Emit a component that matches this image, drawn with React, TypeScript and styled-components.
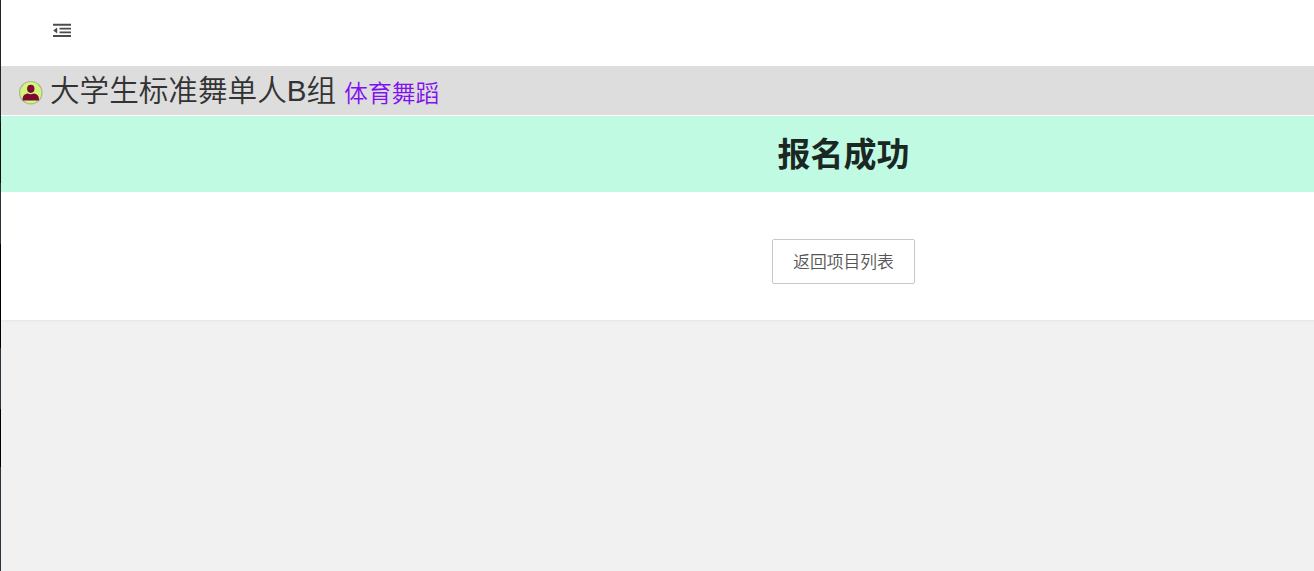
import React from 'react';
import styled, { createGlobalStyle } from 'styled-components';

const GlobalStyle = createGlobalStyle`
  * { box-sizing: border-box; }
  body {
    margin: 0; background: #f1f1f1; overflow: hidden;
    font-family: 'Noto Sans CJK SC', sans-serif;
  }
`;

const Shell = styled.div`
  display: flex; height: 100vh; overflow: hidden;
`;

const SideEdge = styled.div`
  flex: 0 0 1px;
  background: linear-gradient(
    #20242b 0 122px, #07150f 122px 183px, #28333e 183px 244px, #000 244px 348px,
    #28333e 348px 409px, #000 409px 467px, #28333e 467px
  );
`;

/* The body is wider than the window, so its centre sits right of the middle. */
const Body = styled.main`
  flex: 0 0 1685px; display: flex; flex-direction: column;
`;

const Toolbar = styled.header`
  height: 66px; padding: 23px 0 0 51px; background: #fff;
`;

const ShrinkButton = styled.button`
  display: block; padding: 0; border: none; background: transparent;
  color: #4c4c4c; line-height: 0; cursor: pointer;
`;

const TitleBar = styled.div`
  display: flex; align-items: center; height: 49px; padding-left: 17px;
  background: #dddddd;
`;

const Avatar = styled.svg`
  flex: none; margin: 4px 7px 0 0;
`;

const Title = styled.h1`
  margin: 0; font-size: 29.6px; line-height: 49px; font-weight: 350; color: #333;
  font-family: 'Liberation Sans', 'Noto Sans CJK SC', sans-serif; white-space: nowrap;
`;

const Category = styled.span`
  margin: 3px 0 0 8px; font-size: 23.8px; line-height: 46px; font-weight: 350; color: #8010f0;
  white-space: nowrap;
`;

const Card = styled.section`
  height: 205px; padding-top: 1px; background: #fff;
  box-shadow: 0 1px 2px rgba(0, 0, 0, 0.05);
`;

const Banner = styled.div`
  height: 76px; background: #c0fae2; text-align: center;
`;

const Result = styled.h2`
  margin: 0; font-size: 33px; line-height: 72px; font-weight: 700; color: #1b2722;
`;

const Actions = styled.div`
  display: flex; justify-content: center; padding-top: 47px;
`;

const BackButton = styled.button`
  width: 143px; height: 45px; padding: 0; border: 1px solid #c9c9c9; border-radius: 2px;
  background: #fff; color: #555; font-family: 'Noto Sans CJK SC', sans-serif;
  font-size: 16.8px; font-weight: 350; line-height: 43px; white-space: nowrap; cursor: pointer;
`;

const ShrinkIcon = () => (
  <svg width="20" height="16" viewBox="0 0 20 16" fill="currentColor">
    <path d="M1 .8h18v2H1zM7.5 4.8H19v1.8H7.5zM7.5 8.4H19v1.8H7.5zM1 12h18v2H1zM5.2 4.4v6.2L1.2 7.5z" />
  </svg>
);

const AvatarIcon = () => (
  <Avatar width="25" height="25" viewBox="0 0 25 25">
    <circle cx="12.8" cy="12.7" r="11.2" fill="#d4f57c" stroke="#aab88c" strokeWidth="1.2" />
    <ellipse cx="12.8" cy="8.8" rx="3.7" ry="4.1" fill="#7d0a31" />
    <path d="M4.6 20.6c0-4.8 1.4-6.4 5.2-7 1.8 1 4.2 1 6 0 3.8.6 5.2 2.2 5.2 7z" fill="#7d0a31" />
  </Avatar>
);

const App: React.FC = () => (
  <>
    <GlobalStyle />
    <Shell>
      <SideEdge />
      <Body>
        <Toolbar>
          <ShrinkButton aria-label="侧边伸缩"><ShrinkIcon /></ShrinkButton>
        </Toolbar>
        <TitleBar>
          <AvatarIcon />
          <Title>大学生标准舞单人B组</Title>
          <Category>体育舞蹈</Category>
        </TitleBar>
        <Card>
          <Banner>
            <Result>报名成功</Result>
          </Banner>
          <Actions>
            <BackButton>返回项目列表</BackButton>
          </Actions>
        </Card>
      </Body>
    </Shell>
  </>
);

export default App;
